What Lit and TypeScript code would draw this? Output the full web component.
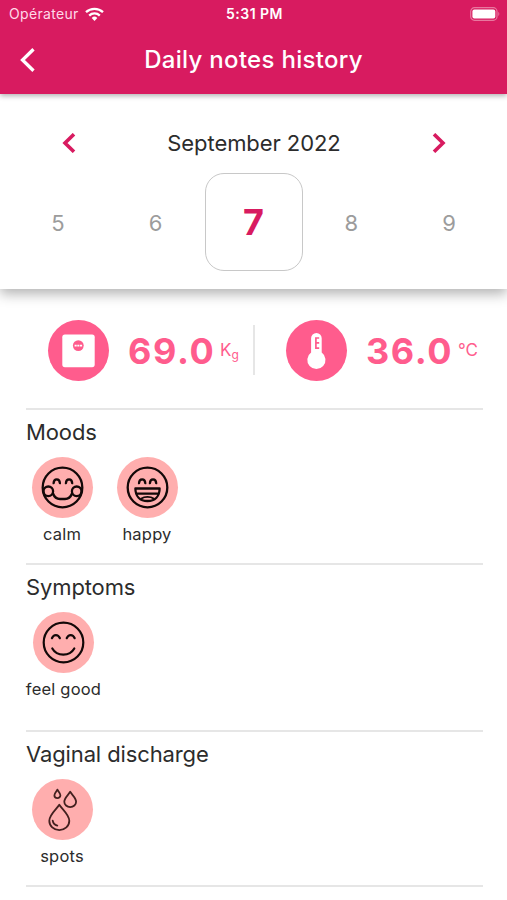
import { LitElement, html, css, svg } from "lit";
import { customElement, property } from "lit/decorators.js";

const face = svg`<circle cx="30.5" cy="30.5" r="19.8" />`;
const icons: Record<string, unknown> = {
  calm: svg`<g fill="none" stroke="#130808" stroke-width="2.3" stroke-linecap="round">
    ${face}
    <path d="M21.6 26.2c.3-5.200 6-5.200 6.300 0M33.900 26.200c.3-5.200 6-5.200 6.300 0" />
    <path d="M21 36.500c1.400 3.800 3.800 5.500 7 5.500h5c3.200 0 5.600-1.700 7-5.500" />
    <circle cx="16.300" cy="34.300" r="4.800" /><circle cx="44.700" cy="34.300" r="4.800" /></g>`,
  happy: svg`<g fill="none" stroke="#130808" stroke-width="2.3" stroke-linecap="round" stroke-linejoin="round">
    ${face}
    <path d="M22 26.200c.3-5.200 6-5.200 6.300 0M32.900 26.200c.3-5.200 6-5.200 6.300 0" />
    <path d="M18.400 31.500h24.200c0 7.700-4.600 12.500-12.100 12.500s-12.100-4.800-12.100-12.500zM19.600 36.600h21.800" />
    <path d="M24.500 41.500c3-2.200 9-2.200 12 0" stroke-width="1.900" /></g>`,
  good: svg`<g fill="none" stroke="#130808" stroke-width="2.200" stroke-linecap="round">
    ${face}
    <path d="M18.900 26.200c1.800-4.200 6.200-4.200 8 0M33.700 26.200c1.800-4.200 6.200-4.200 8 0" />
    <path d="M19.300 36.500c4.600 8.100 17.400 8.100 22 0" /></g>`,
  spots: svg`<g fill="none" stroke="#43201f" stroke-width="1.800" stroke-linecap="round" stroke-linejoin="round">
    <path d="M27.300 25.800c3 4.700 10 9.800 10 16a10 9.300 0 0 1-20 0c0-6.200 7-11.300 10-16z" />
    <path d="M38.200 12.700c1.700 3.200 5.900 6.200 5.900 10a5.900 5.400 0 0 1-11.800 0c0-3.800 4.200-6.800 5.900-10z" />
    <path d="M25.400 10.600c.8 1.900 3 3.500 3 5.600a3 2.900 0 0 1-6 0c0-2.100 2.200-3.700 3-5.600z" />
    <path d="M20.700 41.700c.4 2.600 2 4.300 4.600 4.900" /></g>`,
  scale: svg`<rect x="14.300" y="14.600" width="32.400" height="32.600" rx="2.600" fill="#fff" />
    <circle cx="30.300" cy="25.600" r="5.400" fill="#ff5c8d" />
    <path d="M26.600 25.600h7.500" stroke="#fff" stroke-width="1.800" stroke-dasharray="2.100 .6" />`,
  thermo: svg`<path d="M25.100 18.300a5.200 5.200 0 0 1 10.600 0v14.200a9.100 9.100 0 1 1-10.600 0z" fill="#fff" />
    <path d="M29.900 17.200v11.800M29.900 18h3.300M29.900 22.900h3.300M29.900 28.200h3.300" stroke="#ff5c8d" stroke-width="1.700" fill="none" />`,
};

@customElement("round-icon")
class RoundIcon extends LitElement {
  @property() name = "calm";
  static styles = css`
    :host { display: block; width: 61px; height: 61px; flex: none; border-radius: 50%; background: #ffaeae; }
    :host([strong]) { background: #ff5c8d; }
    svg { display: block; }
  `;
  render() {
    return html`<svg width="61" height="61" viewBox="0 0 61 61">${icons[this.name]}</svg>`;
  }
}

@customElement("app-root")
class AppRoot extends LitElement {
  static styles = css`
    :host { display: block; width: 507px; height: 900px; overflow: hidden; background: #fff;
      font-family: Inter, "Liberation Sans", sans-serif; color: #2c2c2c; }
    * { box-sizing: border-box; }
    svg { display: block; flex: none; }
    .top { position: relative; z-index: 2; height: 94px; background: #d81b60; color: #fff;
      box-shadow: 0 2px 5px rgba(0,0,0,.3); }
    .status { display: grid; grid-template-columns: 1fr auto 1fr; align-items: center; height: 27px; padding: 0 7px 0 9px; }
    .carrier { display: flex; align-items: center; gap: 6px; font-size: 14px; letter-spacing: .33px; color: #ffd9e8; }
    .time { font-size: 14px; font-weight: 600; letter-spacing: .5px; }
    .battery { justify-self: end; }
    .bar { display: grid; grid-template-columns: 60px 1fr 60px; align-items: center; height: 66px; }
    .back { margin-left: 19px; }
    .title { text-align: center; font-size: 24px; line-height: 30px; font-weight: 500; letter-spacing: .3px; white-space: nowrap; }
    .calendar { position: relative; z-index: 1; height: 195px; background: #fff; box-shadow: 0 5px 12px rgba(0,0,0,.3); }
    .month { display: flex; align-items: center; justify-content: space-between; height: 79px; padding: 19px 60px 0 61px; }
    .label { font-size: 22px; letter-spacing: -.07px; }
    .days { display: grid; grid-template-columns: repeat(5, 1fr); height: 98px; padding: 0 9px; }
    .day { display: flex; align-items: center; justify-content: center; padding-top: 1px; font-size: 22px; color: #9c9c9c; }
    .day.on { width: 98px; border: 1.5px solid #c8c8c8; border-radius: 19px; padding-top: 0; font-size: 36px; font-weight: 700; color: #d81b60; }
    .metrics { display: flex; align-items: center; height: 119px; padding: 3px 0 0 48px; color: #ff5c8d; }
    .value { width: 86px; margin-left: 19px; padding-top: 1px; font-size: 36px; font-weight: 700; letter-spacing: 1.6px; white-space: nowrap; }
    .unit { width: 33px; margin-left: 6px; font-size: 17px; white-space: nowrap; }
    .small { font-size: 12px; position: relative; top: 3px; }
    .rule { width: 2px; height: 50px; margin-right: 31px; background: #e6e6e6; }
    .section { height: 155px; margin: 0 24.5px 0 26px; border-top: 2px solid #e6e6e6; }
    .section.tall { height: 167px; }
    .section.end { height: 2px; }
    .heading { height: 47px; padding-top: 8px; font-size: 22px; line-height: 28px; letter-spacing: -.12px; white-space: nowrap; }
    .items { display: flex; gap: 13px; }
    .item { display: flex; flex-direction: column; align-items: center; width: 72px; }
    .item.wide { width: 75px; }
    .name { margin-top: 5px; font-size: 16.500px; line-height: 22px; letter-spacing: .2px; white-space: nowrap; }
  `;

  private chevron(w: number, h: number, points: string, color: string, stroke: number, cls = "") {
    return html`<svg class=${cls} width=${w} height=${h} viewBox="0 0 ${w} ${h}">
      <polyline points=${points} fill="none" stroke=${color} stroke-width=${stroke} /></svg>`;
  }

  private section(title: string, items: [string, string][], tall = false) {
    return html`<section class="section ${tall ? "tall" : ""}">
      <div class="heading">${title}</div>
      <div class="items">${items.map(([icon, label]) => html`
        <div class="item ${tall ? "wide" : ""}"><round-icon name=${icon}></round-icon><span class="name">${label}</span></div>`)}
      </div></section>`;
  }

  render() {
    return html`
      <header class="top">
        <div class="status">
          <div class="carrier"><span>Opérateur</span>
            <svg width="19" height="14" viewBox="0 0 19 14"><g fill="none" stroke="#fff" stroke-width="2.300">
              <path d="M1 5.200a12.300 12.300 0 0 1 17 0M4.200 8.600a7.600 7.600 0 0 1 10.600 0" /></g>
              <path d="M6.700 10.900a4 4 0 0 1 5.600 0L9.500 13.900z" fill="#fff" /></svg>
          </div>
          <div class="time">5:31 PM</div>
          <svg class="battery" width="30" height="14" viewBox="0 0 30 14">
            <rect x=".7" y=".7" width="26.300" height="12.600" rx="3.800" fill="none" stroke="#e8789f" stroke-width="1.200" />
            <rect x="2.400" y="2.400" width="22.900" height="9.200" rx="2" fill="#fff" />
            <path d="M28.300 4.800q2 2.200 0 4.400z" fill="#e8789f" /></svg>
        </div>
        <div class="bar">
          ${this.chevron(16, 24, "14.500,1.200 3.500,12 14.500,22.800", "#fff", 3.3, "back")}
          <div class="title">Daily notes history</div>
        </div>
      </header>
      <div class="calendar">
        <div class="month">
          ${this.chevron(15, 20, "13,1.200 4,10 13,18.800", "#d81b60", 3.6)}
          <div class="label">September 2022</div>
          ${this.chevron(15, 20, "2,1.200 11,10 2,18.800", "#d81b60", 3.6)}
        </div>
        <div class="days">${[5, 6, 7, 8, 9].map((d) => html`<div class="day ${d === 7 ? "on" : ""}">${d}</div>`)}</div>
      </div>
      <div class="metrics">
        <round-icon strong name="scale"></round-icon>
        <div class="value">69.0</div><div class="unit">K<span class="small">g</span></div>
        <div class="rule"></div>
        <round-icon strong name="thermo"></round-icon>
        <div class="value">36.0</div><div class="unit">°C</div>
      </div>
      ${this.section("Moods", [["calm", "calm"], ["happy", "happy"]])}
      ${this.section("Symptoms", [["good", "feel good"]], true)}
      ${this.section("Vaginal discharge", [["spots", "spots"]])}
      <div class="section end"></div>
    `;
  }
}
